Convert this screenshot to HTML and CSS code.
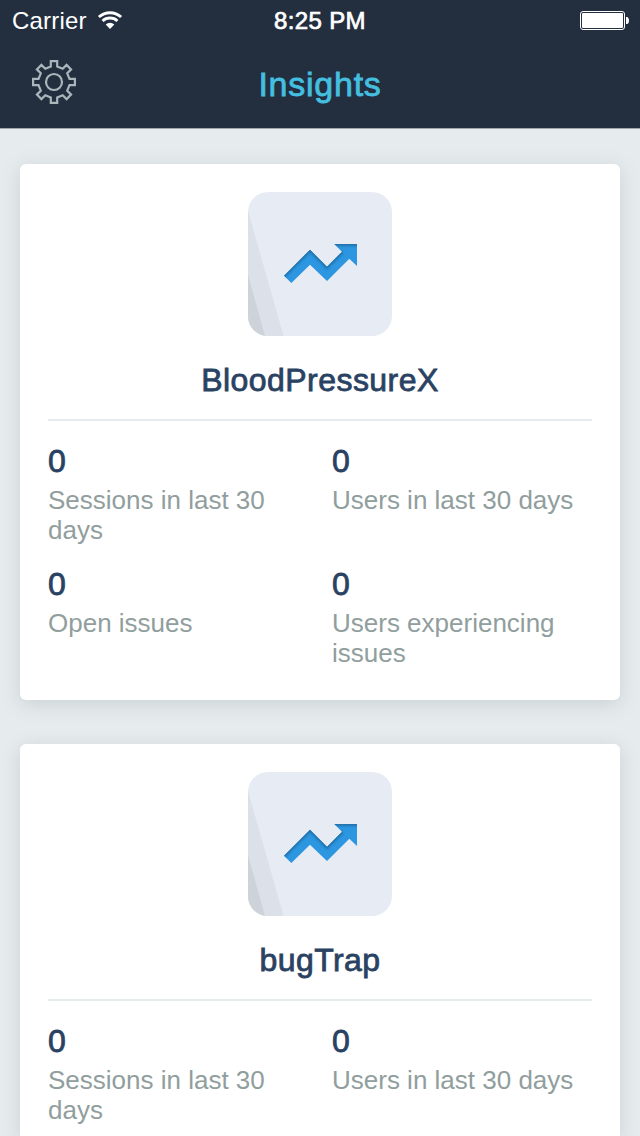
FILE: index.html
```html
<!DOCTYPE html>
<html lang="en">
<head>
<meta charset="utf-8">
<title>Insights</title>
<link rel="stylesheet" href="styles.css">
</head>
<body>
<svg class="defs" width="0" height="0" aria-hidden="true">
  <defs>
    <clipPath id="tile"><rect width="144" height="144" rx="20"/></clipPath>
    <clipPath id="arrow-clip"><path d="M36 83.7 62 57.7 79 74.7 94 59.7 86.3 52H109V74L101.3 66.7 79 89 62 72.7 43.3 91Z"/></clipPath>
    <filter id="soft" x="-20%" y="-20%" width="140%" height="140%"><feGaussianBlur stdDeviation="1"/></filter>
    <symbol id="app-icon" viewBox="0 0 144 144">
      <g clip-path="url(#tile)">
        <rect width="144" height="144" fill="#e7ebf3"/>
        <path d="M0 19 35.5 144H0Z" fill="#dce0e8"/>
        <path d="M0 83 17 144H0Z" fill="#ced3da"/>
      </g>
      <g clip-path="url(#arrow-clip)">
        <rect x="34" y="50" width="76" height="43" fill="#2c96e0"/>
        <path d="M35 84.7 62 57.7 79 74.7 94 59.7M85 52H110" fill="none" stroke="#2472ab" stroke-width="4" filter="url(#soft)"/>
      </g>
    </symbol>
  </defs>
</svg>
<header class="header">
  <div class="status">
    <div class="carrier">
      <span class="carrier-name">Carrier</span>
      <svg class="wifi" width="26" height="20" viewBox="0 0 26 20">
        <g fill="none" stroke="#fff" stroke-width="3">
          <path d="M1.9 7A16.4 16.4 0 0 1 24.1 7"/>
          <path d="M5.6 11A10.9 10.9 0 0 1 20.4 11"/>
        </g>
        <path d="M13 19 8.7 14.4A6.3 6.3 0 0 1 17.3 14.4Z" fill="#fff"/>
      </svg>
    </div>
    <span class="time">8:25 PM</span>
    <svg class="battery" width="50" height="20" viewBox="0 0 50 20">
      <rect x=".5" y="1.5" width="44" height="18" rx="2.5" fill="none" stroke="#fff"/>
      <rect x="2" y="3" width="41" height="15" rx="1" fill="#fff"/>
      <path d="M46 7H47.5Q49 8 49 10.5T47.5 14H46Z" fill="#fff"/>
    </svg>
  </div>
  <div class="nav">
    <svg class="gear" width="44" height="44" viewBox="-22 -22 44 44" fill="none" stroke="#a9b6bb" stroke-width="2.2">
      <circle r="8"/>
      <path d="M-3.2-15.5V-20.9H3.2V-15.5L8.7-13.2 12.6-17.1 17.1-12.6 13.2-8.7 15.5-3.2H20.9V3.2H15.5L13.2 8.7 17.1 12.6 12.6 17.1 8.7 13.2 3.2 15.5V20.9H-3.2V15.5L-8.7 13.2-12.6 17.1-17.1 12.6-13.2 8.7-15.5 3.2H-20.9V-3.2H-15.5L-13.2-8.7-17.1-12.6-12.6-17.1-8.7-13.2Z"/>
    </svg>
    <h1 class="title">Insights</h1>
  </div>
</header>
<main class="list">
  <section class="card">
    <svg class="app-icon" width="144" height="144"><use href="#app-icon"/></svg>
    <h2 class="app-name">BloodPressureX</h2>
    <div class="stats">
      <div class="stat"><div class="value">0</div><div class="label">Sessions in last 30 days</div></div>
      <div class="stat"><div class="value">0</div><div class="label">Users in last 30 days</div></div>
      <div class="stat"><div class="value">0</div><div class="label">Open issues</div></div>
      <div class="stat"><div class="value">0</div><div class="label">Users experiencing issues</div></div>
    </div>
  </section>
  <section class="card card-last">
    <svg class="app-icon" width="144" height="144"><use href="#app-icon"/></svg>
    <h2 class="app-name">bugTrap</h2>
    <div class="stats">
      <div class="stat"><div class="value">0</div><div class="label">Sessions in last 30 days</div></div>
      <div class="stat"><div class="value">0</div><div class="label">Users in last 30 days</div></div>
    </div>
  </section>
</main>
</body>
</html>
```
FILE: styles.css
```css
* { box-sizing: border-box; }
body {
  margin: 0;
  height: 1136px;
  overflow: hidden;
  display: flex;
  flex-direction: column;
  background: #e6ebee;
  font-family: "Liberation Sans", Arial, sans-serif;
}
.defs { position: absolute; }
.header {
  flex: none;
  height: 129px;
  background: #232f3e;
  border-bottom: 1px solid #a0a5a9;
}
.status {
  height: 40px;
  padding: 0 10px 0 12px;
  display: grid;
  grid-template-columns: 1fr auto 1fr;
  align-items: center;
  color: #fff;
  font-size: 24px;
}
.carrier { display: flex; align-items: center; gap: 10px; }
.carrier-name { line-height: 38px; padding-top: 2px; letter-spacing: 0.2px; }
.time {
  line-height: 38px;
  padding-top: 2px;
  letter-spacing: 0.35px;
  margin-right: 2px;
  -webkit-text-stroke: 0.7px #fff;
}
.battery { justify-self: end; }
.nav {
  height: 88px;
  padding: 0 32px;
  display: grid;
  grid-template-columns: 44px 1fr 44px;
  align-items: center;
}
.gear { margin-bottom: 4px; }
.title {
  margin: 0;
  text-align: center;
  font-size: 34px;
  font-weight: 400;
  line-height: 88px;
  letter-spacing: 0.75px;
  color: #44bfe0;
  -webkit-text-stroke: 0.8px #44bfe0;
}
.list {
  flex: 1;
  min-height: 0;
  padding: 35px 20px 0;
  display: flex;
  flex-direction: column;
  gap: 44px;
}
.card {
  flex: none;
  height: 536px;
  padding: 28px 28px 0;
  border-radius: 6px;
  background: #fff;
  box-shadow: 0 4px 18px rgba(120, 135, 135, 0.25);
  display: flex;
  flex-direction: column;
  align-items: center;
}
.card-last {
  flex: 1;
  height: auto;
  min-height: 0;
  border-radius: 6px 6px 0 0;
}
.app-icon { flex: none; }
.app-name {
  flex: none;
  margin: 0;
  width: 100%;
  height: 85px;
  border-bottom: 2px solid #e6ebee;
  text-align: center;
  font-size: 32px;
  font-weight: 400;
  line-height: 88px;
  letter-spacing: 0.45px;
  color: #2a4262;
  -webkit-text-stroke: 0.8px #2a4262;
}
.stats {
  width: 100%;
  padding-top: 22px;
  display: grid;
  grid-template-columns: 260px 260px;
  gap: 21px 24px;
}
.value {
  font-size: 32px;
  line-height: 36px;
  height: 42px;
  color: #2a4262;
  -webkit-text-stroke: 0.8px #2a4262;
}
.stat { height: 102px; }
.label { font-size: 26px; line-height: 30px; color: #909e9d; }
```
